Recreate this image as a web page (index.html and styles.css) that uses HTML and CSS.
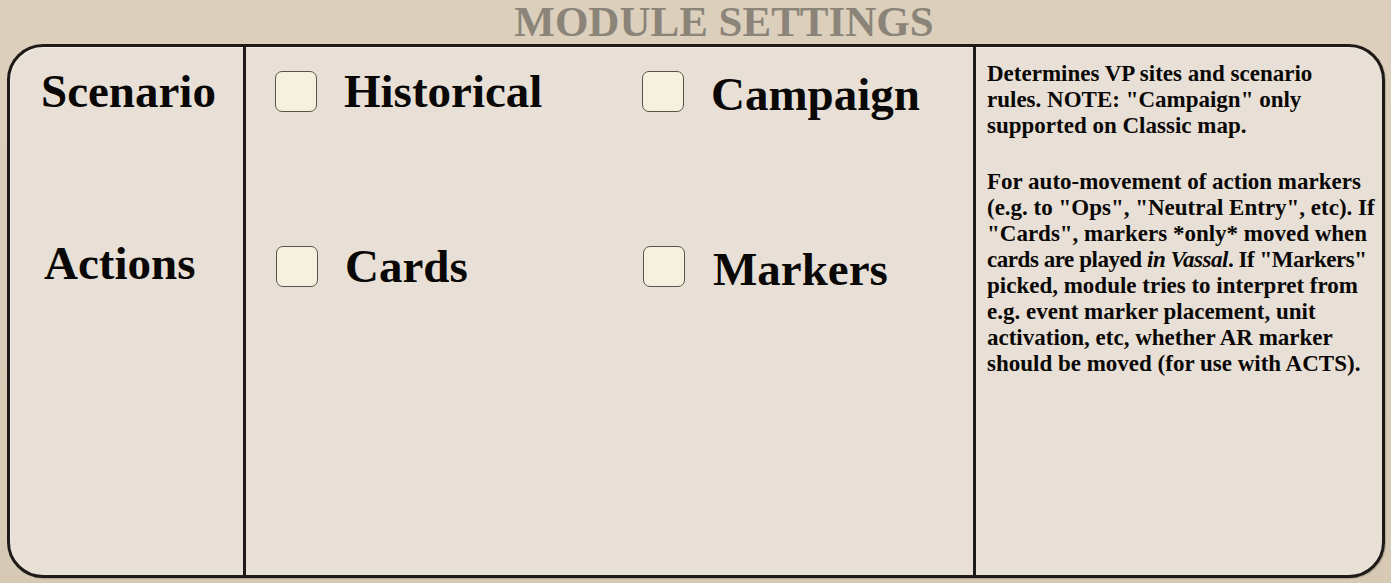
FILE: index.html
```html
<!DOCTYPE html>
<html lang="en">
<head>
<meta charset="utf-8">
<title>Module Settings</title>
<link rel="stylesheet" href="styles.css">
</head>
<body>
<div class="page">
  <h1 class="title">MODULE SETTINGS</h1>
  <div class="panel">
    <div class="labels">
      <div class="label">Scenario</div>
      <div class="label label-actions">Actions</div>
    </div>
    <div class="options">
      <div class="opt-row">
        <div class="opt"><span class="box"></span><span class="opt-text">Historical</span></div>
        <div class="opt"><span class="box"></span><span class="opt-text opt-low">Campaign</span></div>
      </div>
      <div class="opt-row">
        <div class="opt"><span class="box"></span><span class="opt-text">Cards</span></div>
        <div class="opt"><span class="box"></span><span class="opt-text opt-low opt-shift">Markers</span></div>
      </div>
    </div>
    <div class="notes">
      <p>Determines VP sites and scenario<br>rules. NOTE: "Campaign" only<br>supported on Classic map.</p>
      <p>For auto-movement of action markers<br>(e.g. to "Ops", "Neutral Entry", etc). If<br>"Cards", markers *only* moved when<br><span class="tight">cards are played <em>in Vassal</em>. If "Markers"</span><br>picked, module tries to interpret from<br>e.g. event marker placement, unit<br>activation, etc, whether AR marker<br>should be moved (for use with ACTS).</p>
    </div>
  </div>
</div>
</body>
</html>
```

FILE: styles.css
```css
* { box-sizing: border-box; }

html, body {
  margin: 0;
  padding: 0;
}

body {
  width: 1391px;
  height: 583px;
  overflow: hidden;
  background: linear-gradient(180deg, #dccfbc 0%, #d7cab5 100%);
  font-family: "Liberation Serif", "Times New Roman", serif;
  color: #0a0806;
}

.page {
  display: flex;
  flex-direction: column;
}

.title {
  margin: 0;
  height: 44px;
  padding-left: 57px;
  text-align: center;
  font-size: 43px;
  line-height: 44px;
  font-weight: bold;
  color: #8b8479;
}

.panel {
  margin: 0 6px 0 7px;
  height: 534px;
  border: 3px solid #1e1a17;
  border-radius: 36px;
  background: #e8e0d6;
  display: grid;
  grid-template-columns: 236px 730px 1fr;
  box-shadow: inset 1px 1px 0 rgba(255,255,255,0.35), 1px 1px 1px rgba(60,40,20,0.25);
  overflow: hidden;
}

.labels {
  border-right: 3px solid #1e1a17;
  padding: 24px 0 0 31px;
  display: flex;
  flex-direction: column;
  gap: 134px;
}

.label {
  height: 41px;
  font-size: 47px;
  line-height: 41px;
  font-weight: bold;
  white-space: nowrap;
}

.label-actions {
  margin-top: -3px;
  padding-left: 3px;
}

.options {
  border-right: 3px solid #1e1a17;
  padding: 24px 0 0 29px;
  display: flex;
  flex-direction: column;
  gap: 134px;
}

.opt-row {
  display: flex;
  height: 41px;
}

.opt-row + .opt-row {
  padding-left: 1px;
}

.opt {
  flex: none;
  display: flex;
  align-items: center;
  width: 367px;
}

.box {
  flex: none;
  width: 42px;
  height: 41px;
  border: 1px solid #5b534b;
  border-radius: 7px;
  background: #f6f1de;
}

.opt-text {
  margin-left: 27px;
  font-size: 47px;
  line-height: 41px;
  font-weight: bold;
  white-space: nowrap;
}

.opt-low {
  position: relative;
  top: 3px;
}

.opt-shift {
  margin-left: 28px;
}

.notes {
  padding: 14px 4px 0 11px;
  font-size: 23px;
  line-height: 26px;
  font-weight: bold;
  white-space: nowrap;
}

.notes p {
  margin: 0 0 30px;
}

.notes em {
  font-style: italic;
}

.notes .tight {
  letter-spacing: -0.45px;
}
```
